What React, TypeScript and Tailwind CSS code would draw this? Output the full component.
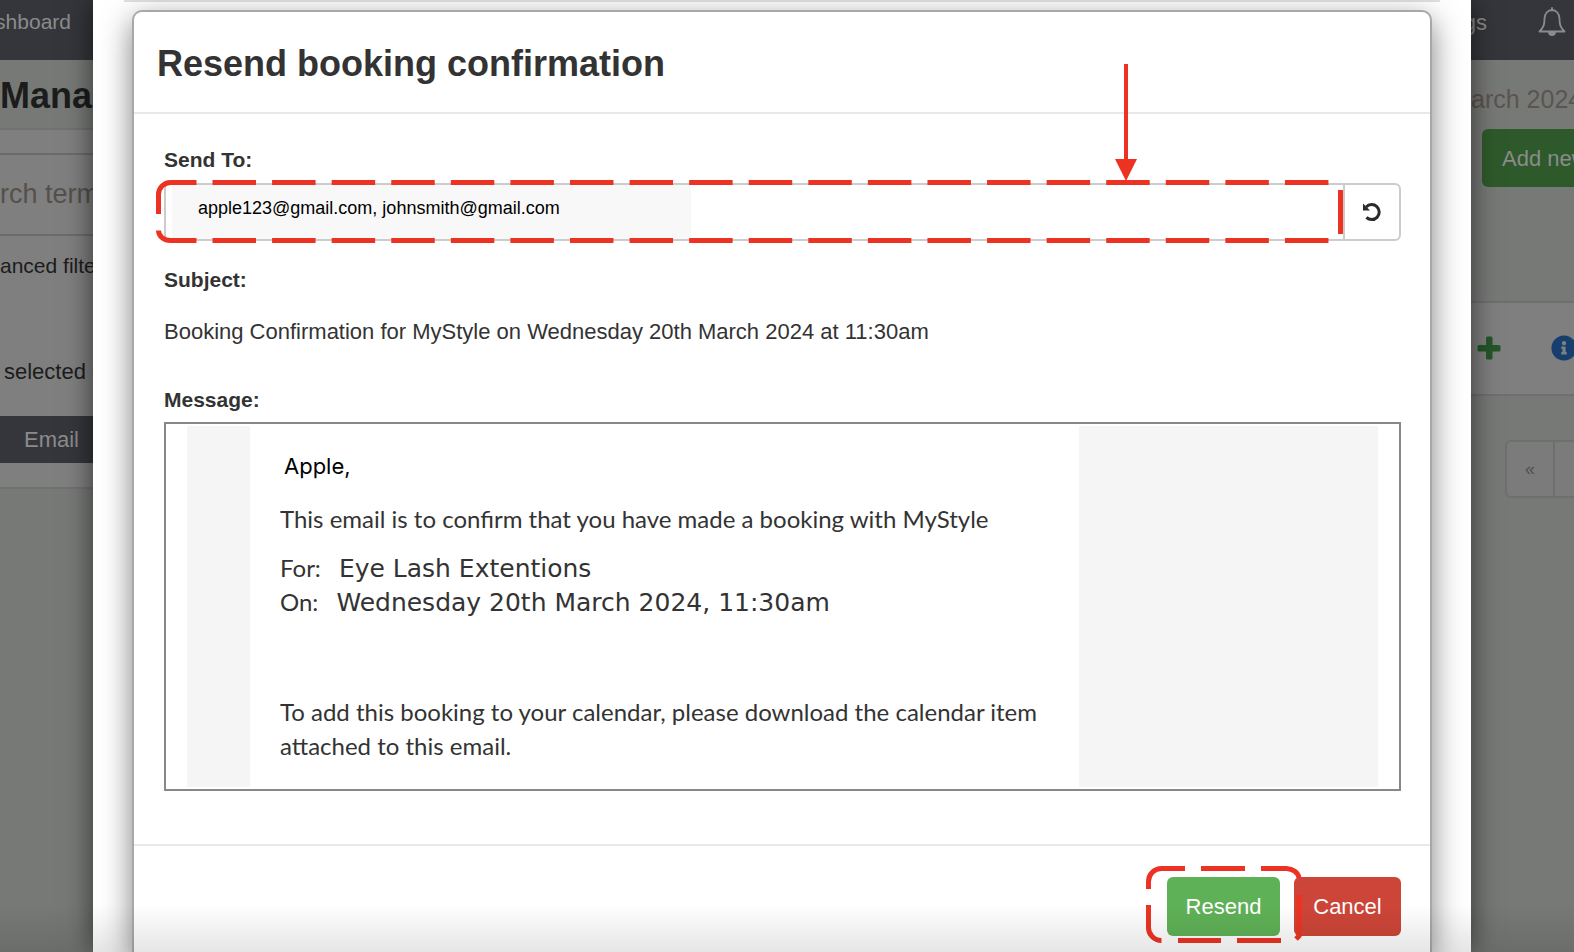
import { useState } from 'react'
import { FaInfoCircle } from 'react-icons/fa'

const DEFAULT_RECIPIENTS = 'apple123@gmail.com, johnsmith@gmail.com'

function BellIcon() {
  return (
    <svg viewBox="0 0 28 32" className="w-7 h-8 shrink-0" fill="none" stroke="currentColor" strokeWidth="1.8">
      <path d="M14 2v2.500M1.500 25.500C6 21 6.500 18 6.500 12.500a7.500 8.500 0 0 1 15 0C21.500 18 22 21 26.500 25.500z" strokeLinejoin="round" strokeLinecap="round" />
      <path d="M11 26.500a3 2.500 0 0 0 6 0z" fill="currentColor" />
    </svg>
  )
}

function PlusIcon() {
  return (
    <svg viewBox="0 0 24 24" className="w-6 h-6 shrink-0" fill="#24562a">
      <rect x="9" y="0.500" width="6.500" height="23" rx="1.500" />
      <rect x="0.500" y="9" width="23" height="6.500" rx="1.500" />
    </svg>
  )
}

function UndoIcon() {
  return (
    <svg viewBox="0 0 20 20" className="w-5 h-5" fill="none">
      <path d="M4.200 5A7.500 7.500 0 1 1 4.400 15.400" stroke="#2b2b2b" strokeWidth="3" />
      <path d="M1 1.500v7h7z" fill="#2b2b2b" />
    </svg>
  )
}

// strip of the customer list left of the dialog
function LeftStrip() {
  return (
    <div className="w-[93px] shrink-0 overflow-hidden whitespace-nowrap bg-[#777977] text-[22px] text-[#1c1c1c]">
      <div className="h-[60px] bg-[#35363b] flex justify-end items-center pr-[22px] pb-4 text-[21px] text-[#8b8b8b]">shboard</div>
      <div className="h-[68px] flex items-center pt-1 text-[36px] font-bold">Mana</div>
      <div className="bg-[#7f7f7f] border-y-2 border-[#717171] h-[361px]">
        <div className="h-[23px]" />
        <div className="h-[83px] border-y-2 border-[#6b6b6b] flex items-center text-[27px] text-[#55504c]">rch term</div>
        <div className="h-[60px] flex items-center text-[21px]">anced filter</div>
        <div className="h-[120px] flex items-end pb-7 pl-1">selected c</div>
        <div className="h-[47px] bg-[#35363b] flex items-center pl-6 text-[#8b8b8b]">Email</div>
      </div>
    </div>
  )
}

function RightStrip() {
  return (
    <div className="w-[103px] shrink-0 overflow-hidden whitespace-nowrap bg-[#777977] text-[22px]">
      <div className="h-[60px] bg-[#35363b] flex justify-between items-center pr-2 pb-4 text-[#8b8b8b]">
        <span className="w-4 flex justify-end">gs</span>
        <BellIcon />
      </div>
      <div className="h-[69px] flex items-end pb-[11px] text-[25px] text-[#5b5450]">arch 2024</div>
      <div className="h-[172px] flex items-start pl-[11px]">
        <button className="h-[58px] shrink-0 rounded-md bg-[#2e5a2b] pl-5 pr-12 text-[#8b8b8b]">Add new</button>
      </div>
      <div className="h-[95px] bg-[#7f7f7f] border-y-2 border-[#6f6f6f] flex items-center gap-[50px] pl-[6px] pb-[2px]">
        <PlusIcon />
        <FaInfoCircle className="shrink-0 text-[#173f6e]" size={26} />
      </div>
      <div className="pt-11 pl-[34px] flex">
        <button className="w-[50px] h-[58px] shrink-0 rounded-l-md bg-[#7b7b7b] border-2 border-[#6f6f6f] text-[18px] text-[#55504c]">«</button>
        <div className="w-[50px] h-[58px] shrink-0 bg-[#7b7b7b] border-y-2 border-[#6f6f6f]" />
      </div>
    </div>
  )
}

function InputHighlight() {
  return (
    <svg className="absolute -left-[10px] -top-[5px] w-[calc(100%+10px)] h-[63px] pointer-events-none" fill="none" stroke="#ec3323" strokeWidth="5">
      <path d="M2.500 34V14.500A12 12 0 0 1 14.500 2.500H40.500" />
      <path d="M2.500 50.500A12 10 0 0 0 14.500 60.500H40.500" />
      <line x1="56.500" y1="2.500" x2="100%" y2="2.500" strokeDasharray="43.500 16.080" />
      <line x1="56.500" y1="60.500" x2="100%" y2="60.500" strokeDasharray="43.500 16.080" />
      <svg x="100%" overflow="visible">
        <line x1="-2.500" y1="10" x2="-2.500" y2="54" />
      </svg>
    </svg>
  )
}

function ResendHighlight() {
  return (
    <svg viewBox="0 0 156 78" className="absolute -left-[21px] -top-[11px] w-[156px] h-[78px] pointer-events-none" fill="none" stroke="#ec3323" strokeWidth="5">
      <path d="M2.500 23V15.500A13 13 0 0 1 15.500 2.500H39M55 2.500h44M115 2.500h25.500A13 11 0 0 1 153 12M153 29v41l-3 3" />
      <path d="M2.500 39V61A13 13 0 0 0 15.500 74.500M32 74.500h43M91 74.500h44" />
    </svg>
  )
}

export default function App() {
  const [sendTo, setSendTo] = useState(DEFAULT_RECIPIENTS)

  return (
    <div className="relative min-h-screen flex overflow-hidden font-['Liberation_Sans',sans-serif] text-[#333]">
      <LeftStrip />

      <div className="relative flex-1 min-w-0 bg-white px-[39px] shadow-[0_0_26px_rgba(0,0,0,0.6)] flex flex-col">
        <div className="h-[10px] shrink-0 -mx-2">
          <div className="h-[2px] bg-[#e0e0e0]" />
        </div>

        <div role="dialog" aria-labelledby="resend-title" className="relative flex-1 bg-white border-2 border-b-0 border-[#a8a8a8] rounded-t-[10px] shadow-[0_10px_30px_rgba(0,0,0,0.5)]">
          <div className="h-[102px] flex items-center border-b-2 border-[#e8e8e8] px-[23px] pt-1">
            <h1 id="resend-title" className="text-[36px] leading-10 font-bold">Resend booking confirmation</h1>
          </div>

          <div className="pl-[30px] pr-[29px] pt-8 pb-[53px] text-[22px] leading-7 border-b-2 border-[#e8e8e8]">
            <label htmlFor="send-to" className="block text-[21px] font-bold">Send To:</label>
            <div className="relative flex h-[58px] mt-[9px]">
              <div className="relative flex-1 flex border-2 border-r-0 border-[#ccc] rounded-l-md pl-1.5">
                <input id="send-to" value={sendTo} onChange={e => setSendTo(e.target.value)}
                  className="w-[519px] bg-[#f8f8f8] pl-[26px] pb-2 text-[18px] text-black outline-none" />
                <InputHighlight />
              </div>
              <button aria-label="Reset recipients" onClick={() => setSendTo(DEFAULT_RECIPIENTS)}
                className="w-[58px] flex items-center justify-center border-2 border-[#ccc] rounded-r-md">
                <UndoIcon />
              </button>
              <svg viewBox="0 0 22 118" className="absolute right-[264px] -top-[119px] w-[22px] h-[118px] pointer-events-none">
                <path d="M11 0v98" stroke="#ec3323" strokeWidth="4" />
                <path d="M0 95h22l-11 22z" fill="#ec3323" />
              </svg>
            </div>

            <h2 className="mt-[25px] text-[21px] font-bold">Subject:</h2>
            <p className="mt-6">Booking Confirmation for MyStyle on Wednesday 20th March 2024 at 11:30am</p>
            <h2 className="mt-10 text-[21px] font-bold">Message:</h2>

            <div className="mt-2 h-[369px] border-2 border-[#888] px-[21px] py-[2px]">
              <div className="h-full bg-[#f5f5f5] pl-[63px] pr-[299px]">
                <div className="h-full bg-white pl-[30px] pr-6 pt-[23px] text-[24px] leading-[34px] font-[Lato,sans-serif]">
                  <p className="pl-1 font-[Inter,sans-serif] text-[22px] text-black">Apple,</p>
                  <p className="mt-[19px]">This email is to confirm that you have made a booking with MyStyle</p>
                  <div className="mt-[15px] h-[68px]">
                    <p className="h-[34px] flex items-baseline gap-[18px]">For: <span className="font-['DejaVu_Sans',sans-serif] text-[25px]">Eye Lash Extentions</span></p>
                    <p className="h-[34px] flex items-baseline gap-[18px]">On: <span className="font-['DejaVu_Sans',sans-serif] text-[25px]">Wednesday 20th March 2024, 11:30am</span></p>
                  </div>
                  <p className="mt-[76px]">To add this booking to your calendar, please download the calendar item attached to this email.</p>
                </div>
              </div>
            </div>
          </div>

          <div className="flex justify-end gap-[14px] pl-[30px] pr-[29px] pt-[31px] text-[22px] text-white">
            <div className="relative z-10">
              <button className="h-[59px] w-[113px] rounded-md bg-[#5fb157]">Resend</button>
              <ResendHighlight />
            </div>
            <button className="h-[59px] w-[107px] rounded-md bg-[#cd4538]">Cancel</button>
          </div>
        </div>
      </div>

      <RightStrip />
      <div className="absolute inset-x-0 bottom-0 z-20 h-12 bg-linear-to-b from-transparent to-black/10 pointer-events-none" />
    </div>
  )
}
